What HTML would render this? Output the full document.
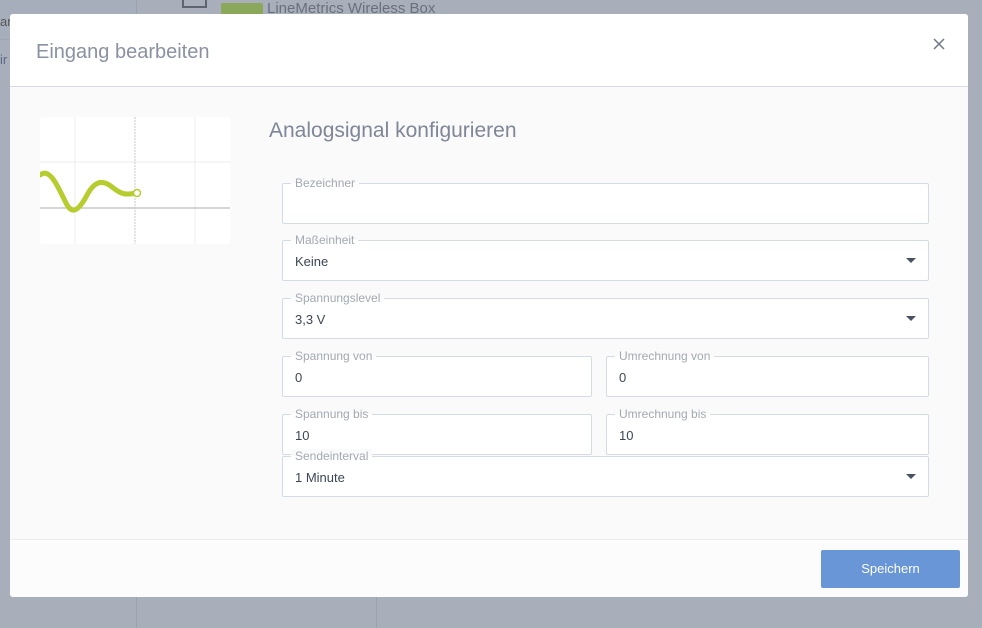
<!DOCTYPE html>
<html><head><meta charset="utf-8"><style>
*{box-sizing:border-box;margin:0;padding:0}
body{width:982px;height:628px;background:#a8afba;font-family:"Liberation Sans",sans-serif;position:relative;overflow:hidden}
.modal{position:absolute;left:10px;top:14px;width:958px;height:583px;background:#fff;border-radius:3px;overflow:hidden}
.hdr{height:73px;border-bottom:1px solid #d6dbe6;background:#fff;position:relative}
.hdr h1{position:absolute;left:26px;top:27px;font-weight:normal;font-size:20px;color:#8a91a1}
.body{position:absolute;top:73px;left:0;right:0;height:453px;background:#fafafa;border-bottom:1px solid #ececec}
.foot{position:absolute;top:527px;left:0;right:0;bottom:0;background:#fcfcfc}
.btn{position:absolute;right:8px;top:9px;width:139px;height:38px;background:#6896d6;color:#fff;font-size:13px;text-align:center;line-height:38px;border-radius:2px}
h2{position:absolute;left:259px;top:32px;font-weight:normal;font-size:21px;color:#7f8697}
.f{position:absolute;border:1px solid #d5dbe4;background:#fff;border-radius:2px;height:41px}
.f label{position:absolute;left:8px;top:-8px;font-size:12px;color:#a3a8b1;padding:0 4px;background:linear-gradient(#fafafa 50%,#fff 50%)}
.f span{position:absolute;left:12px;top:13px;font-size:13px;color:#3e4656}
.f i{position:absolute;right:12px;top:17px;width:0;height:0;border-left:5px solid transparent;border-right:5px solid transparent;border-top:5px solid #4a5262}
</style></head><body>
<div style="position:absolute;left:0;top:0;width:136px;height:40px;background:#a6aebb;border-bottom:1px solid #9ea6b3"></div>
<div style="position:absolute;left:136px;top:0;width:1px;height:628px;background:#9aa2ae"></div>
<div style="position:absolute;left:376px;top:597px;width:1px;height:31px;background:#9aa2ae"></div>
<div style="position:absolute;left:182px;top:-4px;width:25px;height:12px;border:2px solid #5d6573;border-top:none"></div>
<div style="position:absolute;left:221px;top:3px;width:42px;height:12px;background:#8aa75a;border-radius:2px"></div>
<div style="position:absolute;left:267px;top:0px;font-size:15px;color:#68707e">LineMetrics Wireless Box</div>
<div style="position:absolute;left:0;top:14px;font-size:13px;color:#555">ar</div>
<div style="position:absolute;left:0;top:52px;font-size:13px;color:#5a6a88">ir</div>
<div class="modal">
<div class="hdr"><h1>Eingang bearbeiten</h1>
<svg style="position:absolute;right:23px;top:24px" width="12" height="12"><path d="M1,1 L11,11 M11,1 L1,11" stroke="#6f7789" stroke-width="1.5"/></svg></div>
<div class="body">
<svg style="position:absolute;left:30px;top:30px" width="190" height="127">
<rect width="190" height="127" fill="#fff" rx="3"/>
<line x1="35" y1="0" x2="35" y2="127" stroke="#ececec"/>
<line x1="155" y1="0" x2="155" y2="127" stroke="#ececec"/>
<line x1="0" y1="45" x2="190" y2="45" stroke="#ececec"/>
<line x1="95" y1="0" x2="95" y2="127" stroke="#c8c8c8" stroke-dasharray="2,1"/>
<line x1="0" y1="91" x2="190" y2="91" stroke="#c8c8c8" stroke-width="1.5"/>
<path d="M0,58 C10,50 18,70 26,86 C32,98 38,94 46,80 C54,64 62,62 72,70 C82,78 86,78 96,76" fill="none" stroke="#b6cc2f" stroke-width="5" stroke-linecap="round"/>
<circle cx="97" cy="76" r="3.5" fill="#fff" stroke="#b6cc2f" stroke-width="1.5"/>
</svg>
<h2>Analogsignal konfigurieren</h2>
</div>
<div class="foot"><div class="btn">Speichern</div></div>
<div class="f" style="left:272px;top:169px;width:647px"><label>Bezeichner</label></div>
<div class="f" style="left:272px;top:226px;width:647px"><label>Maßeinheit</label><span>Keine</span><i></i></div>
<div class="f" style="left:272px;top:284px;width:647px"><label>Spannungslevel</label><span>3,3 V</span><i></i></div>
<div class="f" style="left:272px;top:342px;width:310px"><label>Spannung von</label><span>0</span></div>
<div class="f" style="left:596px;top:342px;width:323px"><label>Umrechnung von</label><span>0</span></div>
<div class="f" style="left:272px;top:400px;width:310px"><label>Spannung bis</label><span>10</span></div>
<div class="f" style="left:596px;top:400px;width:323px"><label>Umrechnung bis</label><span>10</span></div>
<div class="f" style="left:272px;top:442px;width:647px"><label>Sendeinterval</label><span>1 Minute</span><i></i></div>
</div>
</body></html>
